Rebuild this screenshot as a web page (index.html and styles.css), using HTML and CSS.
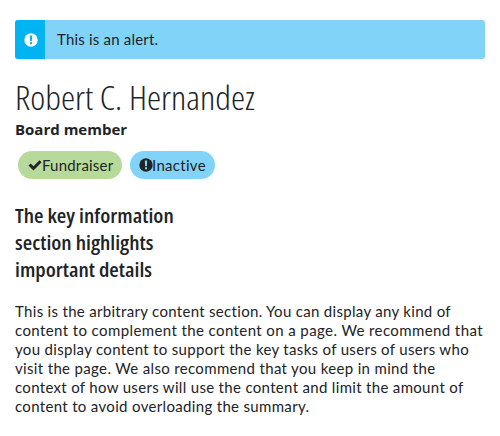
FILE: index.html
```
<!DOCTYPE html>
<html lang="en">
<head>
<meta charset="utf-8">
<title>Summary</title>
<link rel="stylesheet" href="styles.css">
</head>
<body>
<div class="alert">
  <div class="alert-icon"><svg width="14" height="14" viewBox="0 0 14 14"><circle cx="7" cy="7" r="6.7" fill="#fff"/><path d="M5.8 2.6h2.4l-.3 5.6H6.1zM6 9.2h2v2.1H6z" fill="#00b4f1"/></svg></div>
  <div class="alert-text">This is an alert.</div>
</div>
<h1>Robert C. Hernandez</h1>
<div class="subtitle">Board member</div>
<div class="labels">
  <span class="label success"><svg width="14" height="14" viewBox="0 0 14 14"><path d="M.5 7.5 2.6 5.4 5.5 8.3 11.5 2.2 13.6 4.3 5.5 12.4z" fill="#212327"/></svg><span class="fundraiser">Fundraiser</span></span>
  <span class="label info"><svg width="14" height="14" viewBox="0 0 14 14"><circle cx="7" cy="7" r="6.7" fill="#212327"/><path d="M5.8 2.6h2.4l-.3 5.6H6.1zM6 9.2h2v2.1H6z" fill="#81d4f7"/></svg><span class="inactive">Inactive</span></span>
</div>
<h2>The key information<br>section highlights<br>important details</h2>
<p><span class="line a">This is the arbitrary content section. You can display any kind of</span>
<span class="line b">content to complement the content on a page. We recommend that</span>
<span class="line c">you display content to support the key tasks of users of users who</span>
<span class="line d">visit the page. We also recommend that you keep in mind the</span>
<span class="line e">context of how users will use the content and limit the amount of</span>
<span class="line f">content to avoid overloading the summary.</span></p>
</body>
</html>
```
FILE: styles.css
```
* { box-sizing: border-box; }
body { margin: 0; padding: 20px 15px 0; background: #fff; color: #212327; font: 15px/19px Lato, "Open Sans", sans-serif; }
svg { display: block; flex: none; }
.alert { display: flex; height: 39px; border-radius: 3px; overflow: hidden; background: #81d4f7; }
.alert-icon { width: 30px; background: #00b4f1; display: flex; align-items: center; justify-content: center; padding-left: 1px; }
.alert-text { padding: 10px 12px; letter-spacing: .2px; }
h1, h2 { width: max-content; transform: scaleX(1.085); transform-origin: 0 0; white-space: nowrap; }
h1 { margin: 18px 0 0; font: 300 33px/42px "Open Sans", sans-serif; font-stretch: 75%; }
.subtitle { font: 700 15px/20px "Open Sans", sans-serif; height: 20px; }
.labels { display: flex; gap: 8px; margin: 12px 0 0 3px; }
.label { display: flex; height: 28px; border-radius: 14px; padding: 0 9px; line-height: 29px; white-space: nowrap; }
.label svg { margin-top: 7px; }
.success { width: 104px; padding-left: 10px; background: #b7da9b; }
.info { width: 85px; background: #81d4f7; }
.fundraiser { letter-spacing: .2px; }
.inactive { margin-left: -1px; letter-spacing: .3px; }
h2 { margin: 23px 0 0; font: 600 20px/27px "Open Sans", sans-serif; font-stretch: 75%; }
p { margin: 19px 0 0; }
.line { display: block; white-space: nowrap; }
.a { letter-spacing: .31px; }
.b { letter-spacing: .4px; }
.c { letter-spacing: .32px; }
.d { letter-spacing: .34px; }
.e { letter-spacing: .32px; }
.f { letter-spacing: .33px; }
```
